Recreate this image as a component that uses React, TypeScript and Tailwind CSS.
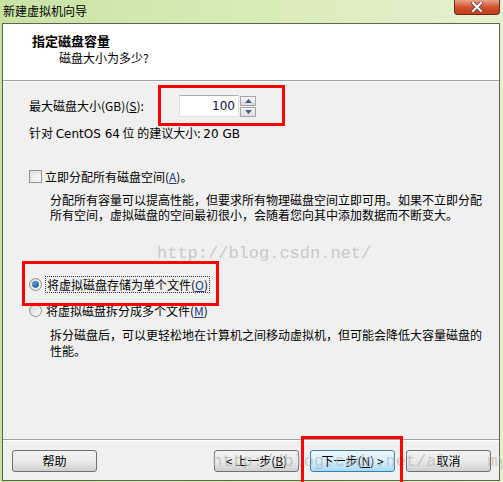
import React from 'react';

const ui = { fontFamily: '"DejaVu Sans", "Noto Sans CJK SC", sans-serif' };
const cjk = { fontFamily: '"Noto Sans CJK SC", "DejaVu Sans", sans-serif' };

function Checkbox() {
  return (
    <span className="w-[13px] h-[13px] border border-[#8f8f8f] bg-gradient-to-br from-[#dcdcdc] to-[#f8f8f8] p-[2px] shrink-0">
      <span className="block w-full h-full bg-gradient-to-br from-[#e4e4e4] to-[#fafafa]" />
    </span>
  );
}

function Radio({ checked }: { checked?: boolean }) {
  return (
    <span className="w-[13px] h-[13px] rounded-full border border-[#8e8f8f] bg-gradient-to-br from-[#d6d6d6] to-[#fbfbfb] flex items-center justify-center shrink-0">
      {checked && <span className="w-[7px] h-[7px] rounded-full bg-gradient-to-br from-[#6ac3f0] to-[#0a4f8f] border border-[#1c5d94]" />}
    </span>
  );
}

function WinButton({ children, primary }: { children: React.ReactNode; primary?: boolean }) {
  return (
    <button
      className={`w-[85px] h-[22px] rounded-[3px] border text-[12px] text-black flex items-center justify-center ${
        primary
          ? 'border-[#3c7fb1] bg-gradient-to-b from-[#eaf6fd] via-[#d9f0fc] to-[#a7d9f5]'
          : 'border-[#707070] bg-gradient-to-b from-[#f2f2f2] via-[#ebebeb] to-[#cfcfcf]'
      }`}
      style={cjk}
    >
      {children}
    </button>
  );
}

export default function App() {
  return (
    <div className="relative w-[503px] h-[482px] overflow-hidden bg-gradient-to-r from-[#c9e2a4] via-[#d8ecb6] to-[#e4f1d0] flex flex-col" style={ui}>
      {/* Title bar */}
      <div className="h-[23px] flex items-start justify-between">
        <span className="pl-[3px] pt-[2px] text-[12px] text-black" style={cjk}>新建虚拟机向导</span>
        <div className="w-[46px] h-[15px] mr-[3px] rounded-b-[4px] border border-t-0 border-[#6b2a1c] bg-gradient-to-b from-[#e8a18c] via-[#d2522f] to-[#c23b17] flex items-center justify-center">
          <svg width="12" height="10" viewBox="0 0 12 10">
            <path d="M2 1 L10 9 M10 1 L2 9" stroke="#4a4a4a" strokeWidth="3.6" strokeLinecap="square" />
            <path d="M2 1 L10 9 M10 1 L2 9" stroke="#ffffff" strokeWidth="2" strokeLinecap="square" />
          </svg>
        </div>
      </div>

      {/* Client area */}
      <div className="ml-[2px] mr-[3px] mb-[1px] flex-1 border border-[#586b46] bg-[#f0f0f0] flex flex-col">
        {/* Header */}
        <div className="h-[57px] bg-white border-b border-[#a0a0a0] pl-[29px] pt-[8px]" style={cjk}>
          <div className="text-[13px] font-bold text-black leading-[17px]">指定磁盘容量</div>
          <div className="text-[12px] text-black leading-[16px] pl-[27px] pt-[1px]">磁盘大小为多少?</div>
        </div>
        <div className="h-px bg-white" />

        {/* Body */}
        <div className="flex-1 pl-[26px] text-[12px] text-black" style={cjk}>
          <div className="mt-[13px] h-[22px] flex items-center">
            <span className="w-[150px]">
              最大磁盘大小(GB)(<span className="underline">S</span>):
            </span>
            <div className="flex items-center">
              <div className="w-[60px] h-[22px] bg-white border border-[#dedede] border-t-[#abadb3] flex items-center justify-end pr-[3px] text-[12px] text-[#101040]" style={ui}>
                100
              </div>
              <div className="ml-px flex flex-col gap-px">
                <span className="w-[16px] h-[10px] border border-[#a6a6a6] bg-gradient-to-b from-[#f5f5f5] to-[#dcdcdc] flex items-center justify-center">
                  <svg width="7" height="4" viewBox="0 0 7 4"><path d="M0 4 L3.5 0 L7 4 Z" fill="#4a5a8a" /></svg>
                </span>
                <span className="w-[16px] h-[10px] border border-[#a6a6a6] bg-gradient-to-b from-[#f5f5f5] to-[#dcdcdc] flex items-center justify-center">
                  <svg width="7" height="4" viewBox="0 0 7 4"><path d="M0 0 L7 0 L3.5 4 Z" fill="#4a5a8a" /></svg>
                </span>
              </div>
            </div>
          </div>
          <div className="mt-[8px] leading-[15px]">
            针对 <span style={ui}>CentOS 64</span> 位 的建议大小: <span style={ui}>20 GB</span>
          </div>

          <div className="mt-[27px] flex items-center gap-[3px] leading-[15px]">
            <Checkbox />
            <span>
              立即分配所有磁盘空间(<span className="underline text-[#1c3a8c]">A</span>)。
            </span>
          </div>
          <div className="mt-[8px] pl-[21px] leading-[15px]">
            分配所有容量可以提高性能，但要求所有物理磁盘空间立即可用。如果不立即分配
            <br />
            所有空间，虚拟磁盘的空间最初很小，会随着您向其中添加数据而不断变大。
          </div>

          <div className="mt-[54px] flex items-center gap-[3px] leading-[15px]">
            <Radio checked />
            <span className="border border-dotted border-[#333] px-px">
              将虚拟磁盘存储为单个文件(<span className="underline text-[#1c3a8c]">O</span>)
            </span>
          </div>
          <div className="mt-[10px] flex items-center gap-[3px] leading-[15px]">
            <Radio />
            <span className="px-px">
              将虚拟磁盘拆分成多个文件(<span className="underline text-[#1c3a8c]">M</span>)
            </span>
          </div>
          <div className="mt-[9px] pl-[21px] leading-[16px]">
            拆分磁盘后，可以更轻松地在计算机之间移动虚拟机，但可能会降低大容量磁盘的
            <br />
            性能。
          </div>
        </div>

        {/* Footer */}
        <div className="border-t border-[#a0a0a0]">
          <div className="border-t border-white h-[40px] flex items-center justify-between pl-[9px] pr-[8px]">
            <WinButton>帮助</WinButton>
            <div className="flex items-center gap-[11px]">
              <WinButton>&lt; 上一步(<span className="underline">B</span>)</WinButton>
              <WinButton primary>下一步(<span className="underline">N</span>) &gt;</WinButton>
              <WinButton>取消</WinButton>
            </div>
          </div>
        </div>
      </div>

      {/* Watermarks */}
      <span className="absolute left-[157px] top-[241px] text-[17px] text-[#c9c9c9] pointer-events-none" style={{ fontFamily: '"Liberation Mono", monospace' }}>
        http://blog.csdn.net/
      </span>
      <span className="absolute left-[212px] top-[449px] text-[17px] text-[#b4b4b4]/70 pointer-events-none" style={{ fontFamily: '"Liberation Mono", monospace' }}>
        http://blog.csdn.net/al&nbsp;&nbsp;&nbsp;&nbsp;my
      </span>

      {/* Red annotation boxes */}
      <div className="absolute left-[158px] top-[85px] w-[127px] h-[41px] border-[3px] border-[#ff0000]" />
      <div className="absolute left-[22px] top-[261px] w-[197px] h-[45px] border-[3px] border-[#ff0000]" />
      <div className="absolute left-[301px] top-[436px] w-[102px] h-[50px] border-[3px] border-[#ff0000]" />
    </div>
  );
}
